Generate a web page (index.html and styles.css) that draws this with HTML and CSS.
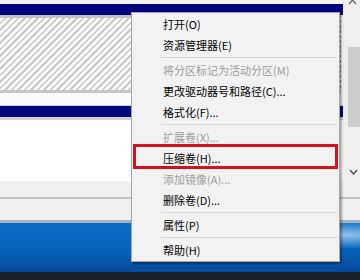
FILE: index.html
```html
<!DOCTYPE html>
<html lang="zh-CN">

<head>
    <meta charset="UTF-8">
    <meta name="viewport" content="width=device-width, initial-scale=1.0">
    <title>磁盘管理</title>
    <link rel="stylesheet" href="styles.css">
</head>

<body>
    <div class="screen">
        <div class="window">
            <div class="panes">
                <div class="disks">
                    <div class="top-strip"></div>
                    <div class="vol-head"></div>
                    <div class="vol-body"></div>
                    <div class="vol-gap"></div>
                    <div class="vol-head"></div>
                    <div class="vol-line"></div>
                    <div class="blank"></div>
                </div>
                <div class="scrollbar">
                    <svg class="arrow-up" width="9" height="6" viewBox="0 0 9 6">
                        <path d="M1 5 L4.5 1 L8 5" fill="none" stroke="#606060" stroke-width="1.2" />
                    </svg>
                    <div class="thumb"></div>
                    <svg class="chevron" width="9" height="6" viewBox="0 0 9 6">
                        <path d="M1 1 L4.5 5 L8 1" fill="none" stroke="#505050" stroke-width="1.4" />
                    </svg>
                </div>
            </div>
            <div class="status"></div>
            <div class="status-line"></div>
            <div class="status low"></div>
        </div>
        <div class="desktop"></div>
        <div class="taskbar"></div>

        <ul class="menu">
            <li class="item">打开(O)</li>
            <li class="item">资源管理器(E)</li>
            <li class="sep"></li>
            <li class="item off">将分区标记为活动分区(M)</li>
            <li class="item">更改驱动器号和路径(C)...</li>
            <li class="item">格式化(F)...</li>
            <li class="sep"></li>
            <li class="item off">扩展卷(X)...</li>
            <li class="item marked">压缩卷(H)...</li>
            <li class="item off">添加镜像(A)...</li>
            <li class="item">删除卷(D)...</li>
            <li class="sep"></li>
            <li class="item">属性(P)</li>
            <li class="sep"></li>
            <li class="item">帮助(H)</li>
        </ul>
    </div>
</body>

</html>
```

FILE: styles.css
```css
body {
    margin: 0;
    background-color: #000;
}

.screen {
    position: relative;
    width: 360px;
    height: 280px;
    overflow: hidden;
    display: flex;
    flex-direction: column;
    font-family: "Noto Sans CJK SC", "Noto Sans", sans-serif;
}

.window {
    display: flex;
    flex-direction: column;
    background-color: #f0f0f0;
}

.panes {
    display: flex;
    flex-direction: row;
    height: 181px;
}

.disks {
    width: 343px;
    display: flex;
    flex-direction: column;
    background-color: #fff;
}

.top-strip {
    height: 4px;
    background-color: #f4f4f6;
}

.vol-head {
    height: 11px;
    background-color: #04047c;
}

.vol-body {
    height: 72px;
    margin-right: 2px;
    border-top: 3px solid #c2c2c2;
    border-bottom: 3px solid #c6c6c6;
    border-right: 1px dashed #8c8c8c;
    background: repeating-linear-gradient(135deg, #fafafa 0px, #fafafa 3px, #c9c9c9 3px, #c9c9c9 4.6px);
}

.vol-gap {
    height: 12px;
    background-color: #fbfbfb;
    border-bottom: 1px solid #cfd2ea;
}

.vol-line {
    height: 3px;
    background-color: #d0d0d0;
}

.blank {
    flex: 1;
    background-color: #fff;
}

.scrollbar {
    flex: 1;
    display: flex;
    flex-direction: column;
    align-items: flex-end;
    background-color: #f0f0f0;
}

.arrow-up {
    display: block;
    margin-top: -1px;
    margin-right: 3px;
}

.thumb {
    width: 12px;
    height: 80px;
    margin-top: 42px;
    background-color: #cdcdcd;
}

.chevron {
    display: block;
    margin-top: 42px;
    margin-right: 2px;
}

.status {
    height: 16px;
    background-color: #f0f0f0;
}

.status.low {
    height: 21px;
    border-bottom: 3px solid #a9b3bf;
}

.status-line {
    height: 2px;
    background-color: #c4c4c4;
}

.desktop {
    flex: 1;
    background:
        radial-gradient(ellipse 90px 14px at 345px 12px, rgba(190, 225, 250, 0.75), rgba(190, 225, 250, 0) 100%),
        linear-gradient(to bottom, #0a6cc4 0%, #0761b8 60%, #04479a 100%);
}

.taskbar {
    height: 8px;
    background-color: #1b1f27;
}

.menu {
    position: absolute;
    top: 12px;
    left: 131px;
    width: 207px;
    margin: 0;
    padding: 1px 0 0;
    list-style: none;
    background-color: #f2f2f2;
    border: 1px solid #a6a6a6;
    box-shadow: 2px 2px 2px rgba(0, 0, 0, 0.35);
}

.item {
    position: relative;
    height: 21px;
    line-height: 21px;
    padding-left: 31px;
    font-size: 11px;
    color: #000;
    white-space: nowrap;
}

.item.off {
    color: #9d9d9d;
}

.item.marked::after {
    content: "";
    position: absolute;
    top: -4px;
    bottom: 0;
    left: 1px;
    right: 1px;
    border: 3px solid #d3131b;
}

.sep {
    height: 4px;
    margin-left: 29px;
    margin-right: 2px;
    background: linear-gradient(to bottom, transparent 1px, #d5d5d5 1px, #d5d5d5 2px, transparent 2px);
}
```
